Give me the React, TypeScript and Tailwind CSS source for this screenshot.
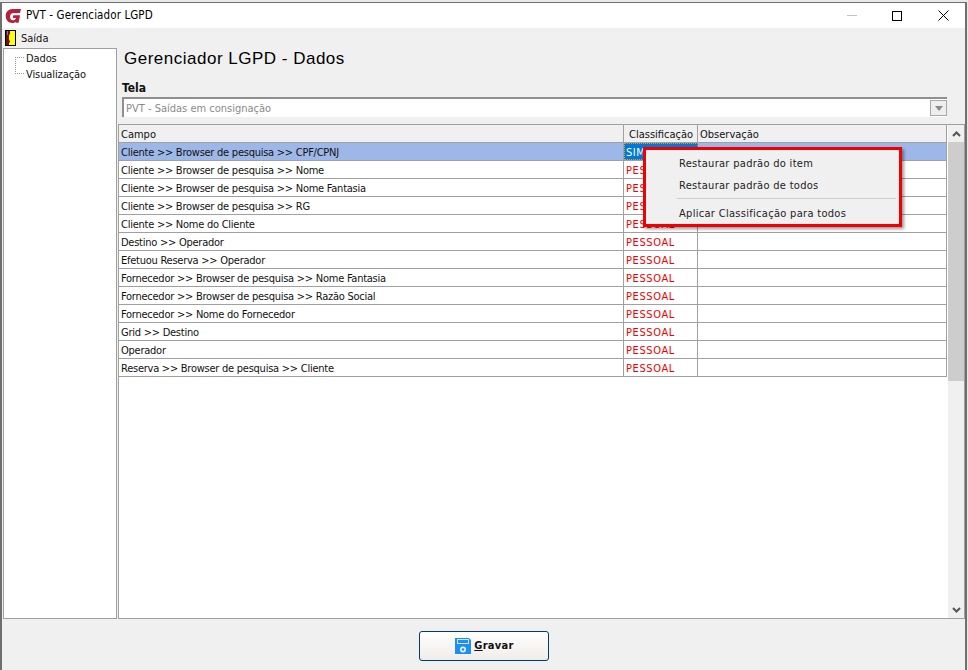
import React from "react";

const rows = [
  "Cliente >> Browser de pesquisa >> CPF/CPNJ",
  "Cliente >> Browser de pesquisa >> Nome",
  "Cliente >> Browser de pesquisa >> Nome Fantasia",
  "Cliente >> Browser de pesquisa >> RG",
  "Cliente >> Nome do Cliente",
  "Destino >> Operador",
  "Efetuou Reserva >> Operador",
  "Fornecedor >> Browser de pesquisa >> Nome Fantasia",
  "Fornecedor >> Browser de pesquisa >> Razão Social",
  "Fornecedor >> Nome do Fornecedor",
  "Grid >> Destino",
  "Operador",
  "Reserva >> Browser de pesquisa >> Cliente",
];

function Logo() {
  return (
    <svg width="17" height="16" viewBox="0 0 16 16" className="shrink-0">
      <path d="M15.500 1H7C3 1 .2 4.200.2 8c0 4.200 2.800 7 6.500 7 1.500 0 2.800-.5 3.700-1.300l-.3 1h3l1.500-7.500H7.800l-.6 2.700h3.300c-.5 1.500-1.600 2.400-3 2.400-1.800 0-3-1.400-3-3.300C4.500 6.600 6 5 8 5h6.500z" fill="#b5203a" />
    </svg>
  );
}

function Door() {
  return (
    <svg width="12" height="17" viewBox="0 0 12 17" className="shrink-0">
      <rect x="0" y="0" width="11" height="16" fill="#000" />
      <rect x="1" y="1" width="9" height="14" fill="#ffff00" />
      <path d="M1 1h4v3l-1 1v5l1 1v1l-1 1v2H1z" fill="#7a0c0c" />
      <rect x="2" y="1" width="1" height="4" fill="#19a7c9" />
    </svg>
  );
}

function Floppy() {
  return (
    <svg width="16" height="16" viewBox="0 0 16 16" className="shrink-0">
      <path d="M0 0h14l2 2v14H0z" fill="#1e90f0" />
      <rect x="2" y="1" width="12" height="5" fill="#cfe6fa" />
      <rect x="3" y="2" width="10" height="3" fill="#1e90f0" />
      <circle cx="8" cy="11.500" r="3" fill="#e8f3fd" />
      <circle cx="8" cy="11.500" r="1.300" fill="#1e90f0" />
    </svg>
  );
}

export default function App() {
  return (
    <div className="relative h-[670px] w-[968px] overflow-hidden bg-[#e8e8e8] pt-[2px] pr-[1px] font-['DejaVu_Sans_Condensed','DejaVu_Sans',sans-serif] text-[11px] text-[#111] [font-stretch:condensed]">
      <div className="flex h-[668px] flex-col border-t border-r-2 border-l-2 border-[#6f6f6f] bg-[#f0f0f0]">
        {/* title bar */}
        <div className="flex h-[25px] shrink-0 items-center bg-white pl-[3px]">
          <Logo />
          <span className="ml-[4px] text-[11.5px] tracking-[0.1px] text-black">PVT - Gerenciador LGPD</span>
          <div className="-mr-[1px] ml-auto flex h-full items-center">
            <div className="flex w-[46px] justify-center pl-[2px]">
              <div className="h-[1px] w-[10px] bg-[#c4c4c4]" />
            </div>
            <div className="flex w-[46px] justify-center">
              <div className="h-[10px] w-[10px] border border-black" />
            </div>
            <div className="flex w-[46px] justify-center">
              <svg width="11" height="11" viewBox="0 0 11 11">
                <path d="M.5.500l10 10M10.500.500l-10 10" stroke="#000" strokeWidth="1" fill="none" />
              </svg>
            </div>
          </div>
        </div>
        {/* menu */}
        <div className="flex h-[20px] shrink-0 items-center gap-[4px] pl-[3px]">
          <Door />
          <span className="pt-[2px] text-[#111]">Saída</span>
        </div>
        {/* main */}
        <div className="flex h-[571px] shrink-0 gap-[1px] pl-[1px]">
          <div className="relative w-[114px] shrink-0 border border-[#a0a0a0] bg-white pt-[2px] pl-[22px] leading-[16px] tracking-[-0.1px]">
            <div className="absolute top-[8px] left-[11px] h-[17px] w-[9px] border-b border-l border-dotted border-[#999]" />
            <div className="absolute top-[8px] left-[11px] h-[1px] w-[9px] border-t border-dotted border-[#999]" />
            <div>Dados</div>
            <div>Visualização</div>
          </div>
          <div className="flex min-w-0 flex-1 flex-col">
            <div className="mt-[1px] h-[21px] shrink-0 pl-[6px] font-['Liberation_Sans',sans-serif] text-[17px] leading-[20px] tracking-[0.5px] text-black [font-stretch:normal]">
              Gerenciador LGPD - Dados
            </div>
            <div className="mt-[11px] h-[14px] shrink-0 pl-[4px] text-[12px] leading-[14px] font-bold text-[#111]">Tela</div>
            <div className="mt-[2px] ml-[4px] flex h-[20px] w-[825px] shrink-0 items-center border-2 border-r-0 border-b-0 border-[#8f8f8f] bg-white pl-[2px] text-[#8a8a8a]">
              <span className="flex-1 pt-[2px]">PVT - Saídas em consignação</span>
              <div className="flex h-[16px] w-[17px] items-center justify-center border border-[#a8a8a8] bg-[#eeeeee]">
                <div className="h-0 w-0 border-x-[4px] border-t-[5px] border-x-transparent border-t-[#8a8a8a]" />
              </div>
            </div>
            <div className="mt-[7px] flex min-h-0 flex-1 border border-[#a0a0a0] bg-white">
              <div className="flex min-w-0 flex-1 flex-col pr-[1px]">
                <div className="flex h-[18px] shrink-0 border-b border-[#a0a0a0] bg-[#f0f0f0] leading-[19px]">
                  <div className="w-[505px] shrink-0 border-r border-[#a0a0a0] pl-[2px]">Campo</div>
                  <div className="w-[74px] shrink-0 border-r border-[#a0a0a0] pl-[5px]">Classificação</div>
                  <div className="flex-1 border-r border-[#a0a0a0] pl-[2px]">Observação</div>
                </div>
                {rows.map((r, i) => (
                  <div key={r} className={`flex h-[18px] shrink-0 border-b border-[#a0a0a0] leading-[19px] ${i === 0 ? "bg-[#9db8e8]" : "bg-white"}`}>
                    <div className="w-[505px] shrink-0 border-r border-[#a0a0a0] pl-[2px] tracking-[-0.25px]">{r}</div>
                    {i === 0 ? (
                      <div className="w-[74px] shrink-0 border border-dotted border-[#e0a030] bg-[#0078d7] pl-[1px] leading-[17px] tracking-[0.5px] text-white">SIM</div>
                    ) : (
                      <div className="w-[74px] shrink-0 border-r border-[#a0a0a0] pl-[2px] tracking-[0.6px] text-[#f00000]">PESSOAL</div>
                    )}
                    <div className="flex-1 border-r border-[#a0a0a0]" />
                  </div>
                ))}
              </div>
              <div className="flex w-[16px] shrink-0 flex-col bg-[#f0f0f0]">
                <div className="flex h-[17px] shrink-0 items-center justify-center">
                  <svg width="9" height="6" viewBox="0 0 9 6"><path d="M1 5l3.500-3.500L8 5" stroke="#555" strokeWidth="2" fill="none" /></svg>
                </div>
                <div className="h-[239px] shrink-0 bg-[#cdcdcd]" />
                <div className="mt-auto flex h-[17px] shrink-0 items-center justify-center">
                  <svg width="9" height="6" viewBox="0 0 9 6"><path d="M1 1l3.500 3.500L8 1" stroke="#555" strokeWidth="2" fill="none" /></svg>
                </div>
              </div>
            </div>
          </div>
        </div>
        {/* footer */}
        <div className="flex flex-1 items-start justify-center pt-[12px]">
          <button className="flex h-[30px] w-[130px] items-center justify-center gap-[3px] rounded-[3px] border border-[#003c74] bg-gradient-to-b from-white to-[#f0ece8] pl-[2px] text-[11px] font-bold tracking-[0.3px] text-[#111]">
            <Floppy />
            <span className="pt-[1px]"><span className="underline">G</span>ravar</span>
          </button>
        </div>
      </div>
      {/* context menu */}
      <div className="absolute top-[147px] left-[643px] flex h-[80px] w-[259px] flex-col border-[3px] border-[#f00000] bg-[#f0f0f0] pt-[2px] pl-[33px] tracking-[0.3px] text-[#222] shadow-[2px_2px_3px_rgba(0,0,0,0.4)]">
        <div className="flex h-[22px] shrink-0 items-center pt-[2px]">Restaurar padrão do item</div>
        <div className="flex h-[22px] shrink-0 items-center pt-[2px]">Restaurar padrão de todos</div>
        <div className="mt-[2px] mr-[3px] mb-[3px] ml-[-2px] h-[1px] shrink-0 bg-[#cfcfcf]" />
        <div className="flex h-[22px] shrink-0 items-center pt-[2px]">Aplicar Classificação para todos</div>
      </div>
    </div>
  );
}
